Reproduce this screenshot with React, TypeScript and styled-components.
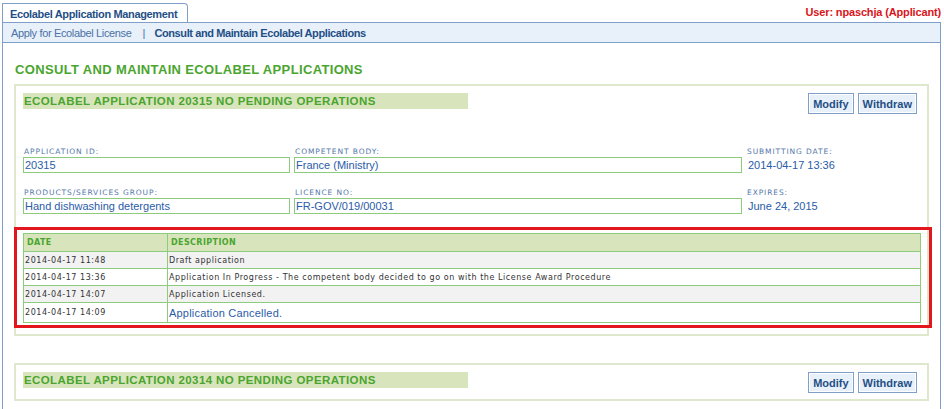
import * as React from 'react';
import styled, { createGlobalStyle } from 'styled-components';

const GlobalStyle = createGlobalStyle`
  html, body {
    margin: 0;
    padding: 0;
    background: #ffffff;
    font-family: "Liberation Sans", Arial, sans-serif;
    overflow: hidden;
  }
`;

const Page = styled.div`
  padding: 3px 3px 0 2px;
  height: 409px;
  box-sizing: border-box;
`;

const TopRow = styled.div`
  display: flex;
  justify-content: space-between;
  align-items: flex-end;
`;

const Tab = styled.div`
  height: 19px;
  box-sizing: border-box;
  padding: 4px 7px 0 7px;
  border: 1px solid #7f9fc8;
  border-bottom: none;
  border-top-right-radius: 4px;
  width: 186px;
  white-space: nowrap;
  font-size: 11px;
  font-weight: bold;
  letter-spacing: -0.35px;
  color: #1f4f86;
  background: #fff;
`;

const UserLabel = styled.div`
  font-size: 11px;
  font-weight: bold;
  letter-spacing: -0.15px;
  color: #d8141a;
  padding-bottom: 4px;
`;

const Panel = styled.div`
  border: 1px solid #7f9fc8;
  border-bottom: none;
  height: 400px;
`;

const Nav = styled.div`
  display: flex;
  align-items: center;
  height: 19px;
  padding-left: 8px;
  background: #e8f0f9;
  border-bottom: 1px solid #7f9fc8;
  font-size: 11px;
  color: #4a72a8;
`;

const NavLink = styled.span<{ $active?: boolean }>`
  font-weight: ${(p) => (p.$active ? 'bold' : 'normal')};
  color: ${(p) => (p.$active ? '#1f4f86' : '#4a72a8')};
  letter-spacing: ${(p) => (p.$active ? '-0.4px' : '-0.35px')};
`;

const NavSep = styled.span`
  margin: 0 9px 0 11px;
  color: #4a72a8;
`;

const Content = styled.div`
  padding: 19px 11px 0 11px;
`;

const PageTitle = styled.h1`
  margin: 0 0 7px 1px;
  font-size: 13px;
  font-weight: bold;
  letter-spacing: 0.35px;
  color: #4aa52e;
  line-height: 15px;
`;

const Card = styled.div`
  border: 2px solid #dfe8cc;
  padding: 7px 10px 6px 7px;
  margin-bottom: 27px;
`;

const CardHeader = styled.div`
  display: flex;
  justify-content: space-between;
  align-items: flex-start;
`;

const CardTitle = styled.div`
  width: 445px;
  height: 16px;
  box-sizing: border-box;
  padding-left: 1px;
  background: #d8e4bc;
  font-size: 11.5px;
  font-weight: bold;
  color: #4aa52e;
  line-height: 16px;
  letter-spacing: 0.4px;
  white-space: nowrap;
`;

const Buttons = styled.div`
  display: flex;
  gap: 4px;
`;

const Button = styled.button`
  height: 21px;
  padding: 0 4px;
  background: #e8f0f9;
  border: 1px solid #7f9fc8;
  box-shadow: inset 0 0 0 1px #ffffff;
  font-family: "Liberation Sans", Arial, sans-serif;
  font-size: 11px;
  font-weight: bold;
  color: #1f4f86;
  cursor: pointer;
`;

const Fields = styled.div`
  display: grid;
  grid-template-columns: 267px 448px 1fr;
  column-gap: 4px;
  row-gap: 15px;
  margin-top: 33px;
`;

const Field = styled.div`
  display: flex;
  flex-direction: column;
`;

const FieldLabel = styled.div`
  font-family: "DejaVu Sans", Verdana, sans-serif;
  font-size: 7.5px;
  letter-spacing: 0.9px;
  color: #5577aa;
  height: 10px;
  line-height: 10px;
  padding-left: 1px;
`;

const FieldBox = styled.div<{ $plain?: boolean }>`
  height: 16px;
  box-sizing: border-box;
  border: 1px solid ${(p) => (p.$plain ? 'transparent' : '#8ccc7c')};
  padding-left: 1px;
  font-size: 11px;
  line-height: 14px;
  color: #2a5ca8;
`;

const Highlight = styled.div`
  border: 3px solid #e3151d;
  padding: 3px 8px 2px 6px;
  margin: 13px -15px 0 -9px;
`;

const Table = styled.table`
  width: 100%;
  border-collapse: collapse;
  font-family: "DejaVu Sans", Verdana, sans-serif;
`;

const HeadCell = styled.th<{ $w?: number }>`
  width: ${(p) => (p.$w ? `${p.$w}px` : 'auto')};
  height: 17px;
  padding: 0 0 0 3px;
  text-align: left;
  background: #d8e4bc;
  border: 1px solid #8ccc7c;
  font-size: 8px;
  font-weight: bold;
  letter-spacing: 0.4px;
  color: #4aa52e;
`;

const Row = styled.tr<{ $alt?: boolean }>`
  background: ${(p) => (p.$alt ? '#f2f2f2' : '#ffffff')};
`;

const Cell = styled.td<{ $big?: boolean }>`
  height: ${(p) => (p.$big ? '19px' : '16px')};
  padding: 0 0 0 1px;
  border: 1px solid #8ccc7c;
  font-family: ${(p) => (p.$big ? '"Liberation Sans", Arial, sans-serif' : '"DejaVu Sans", Verdana, sans-serif')};
  font-size: ${(p) => (p.$big ? '11px' : '8px')};
  letter-spacing: ${(p) => (p.$big ? '0.2px' : '0.55px')};
  color: ${(p) => (p.$big ? '#2a5ca8' : '#333333')};
`;

const history = [
  { date: '2014-04-17 11:48', text: 'Draft application' },
  { date: '2014-04-17 13:36', text: 'Application In Progress - The competent body decided to go on with the License Award Procedure' },
  { date: '2014-04-17 14:07', text: 'Application Licensed.' },
  { date: '2014-04-17 14:09', text: 'Application Cancelled.', big: true },
];

function ApplicationCard({ id, details }: { id: string; details?: boolean }) {
  return (
    <Card>
      <CardHeader>
        <CardTitle>ECOLABEL APPLICATION {id} NO PENDING OPERATIONS</CardTitle>
        <Buttons>
          <Button>Modify</Button>
          <Button>Withdraw</Button>
        </Buttons>
      </CardHeader>
      {details && (
        <>
          <Fields>
            <Field>
              <FieldLabel>APPLICATION ID:</FieldLabel>
              <FieldBox>{id}</FieldBox>
            </Field>
            <Field>
              <FieldLabel>COMPETENT BODY:</FieldLabel>
              <FieldBox>France (Ministry)</FieldBox>
            </Field>
            <Field>
              <FieldLabel>SUBMITTING DATE:</FieldLabel>
              <FieldBox $plain>2014-04-17 13:36</FieldBox>
            </Field>
            <Field>
              <FieldLabel>PRODUCTS/SERVICES GROUP:</FieldLabel>
              <FieldBox>Hand dishwashing detergents</FieldBox>
            </Field>
            <Field>
              <FieldLabel>LICENCE NO:</FieldLabel>
              <FieldBox>FR-GOV/019/00031</FieldBox>
            </Field>
            <Field>
              <FieldLabel>EXPIRES:</FieldLabel>
              <FieldBox $plain>June 24, 2015</FieldBox>
            </Field>
          </Fields>
          <Highlight>
            <Table>
              <thead>
                <tr>
                  <HeadCell $w={140}>DATE</HeadCell>
                  <HeadCell>DESCRIPTION</HeadCell>
                </tr>
              </thead>
              <tbody>
                {history.map((h, i) => (
                  <Row key={h.date} $alt={i % 2 === 0}>
                    <Cell>{h.date}</Cell>
                    <Cell $big={h.big}>{h.text}</Cell>
                  </Row>
                ))}
              </tbody>
            </Table>
          </Highlight>
        </>
      )}
    </Card>
  );
}

export default function App() {
  return (
    <Page>
      <GlobalStyle />
      <TopRow>
        <Tab>Ecolabel Application Management</Tab>
        <UserLabel>User: npaschja (Applicant)</UserLabel>
      </TopRow>
      <Panel>
        <Nav>
          <NavLink>Apply for Ecolabel License</NavLink>
          <NavSep>|</NavSep>
          <NavLink $active>Consult and Maintain Ecolabel Applications</NavLink>
        </Nav>
        <Content>
          <PageTitle>CONSULT AND MAINTAIN ECOLABEL APPLICATIONS</PageTitle>
          <ApplicationCard id="20315" details />
          <ApplicationCard id="20314" />
        </Content>
      </Panel>
    </Page>
  );
}
